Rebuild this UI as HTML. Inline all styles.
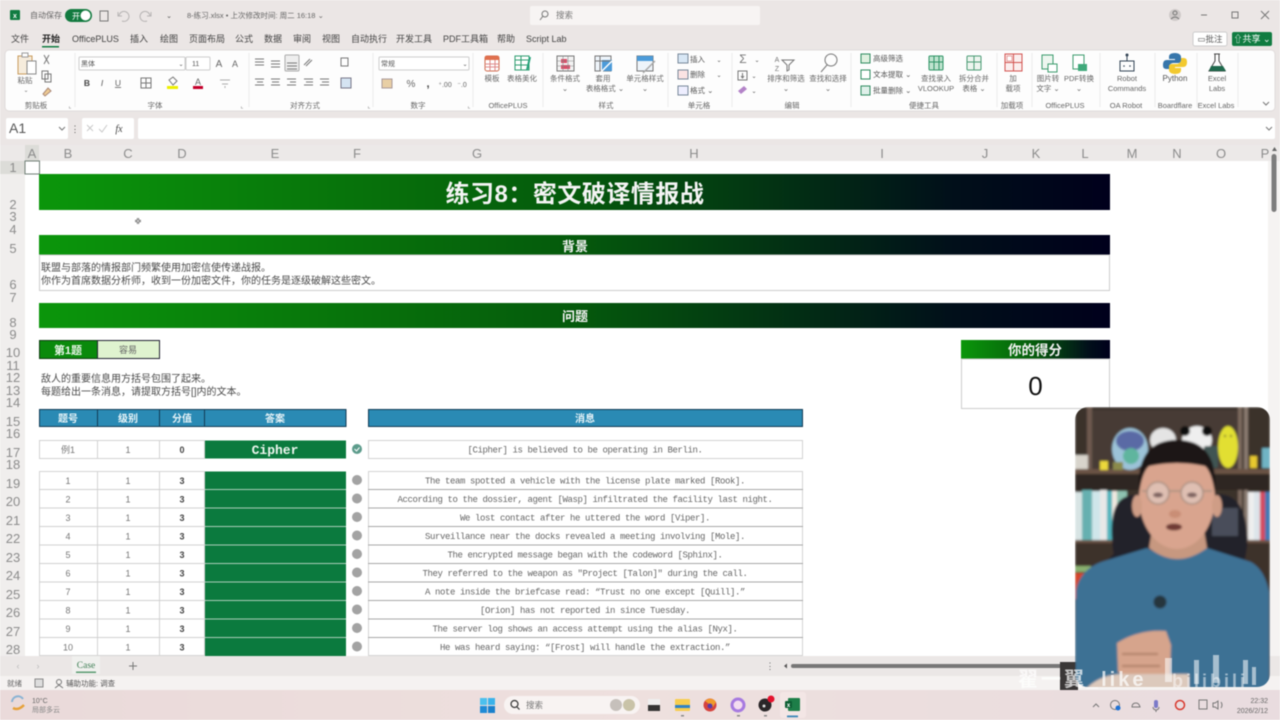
<!DOCTYPE html>
<html lang="zh"><head><meta charset="utf-8"><title>8-练习.xlsx</title>
<style>
html,body{margin:0;padding:0;width:1280px;height:720px;overflow:hidden;background:#fff}
svg{display:block;filter:blur(.45px)}
text{font-family:"Liberation Sans","Noto Sans CJK SC",sans-serif;fill:#555;font-size:8px}
.m{text-anchor:middle}
.r{text-anchor:end}
.cj{font-size:10px;fill:#4a4a4a}
.msg{font-family:"Liberation Mono","Noto Sans CJK SC",monospace;font-size:9px;letter-spacing:-.4px;fill:#666;text-anchor:middle}
.hd{font-size:13px;fill:#8c8c8c;text-anchor:middle}
.rn{font-size:13px;fill:#8c8c8c;text-anchor:middle}
.n{font-size:9px;fill:#777;text-anchor:middle}
.b{font-size:9px;fill:#444;font-weight:bold;text-anchor:middle}
.th{font-size:10px;fill:#e8f4f8;font-weight:bold;text-anchor:middle}
.mn{font-size:9px;fill:#444}
.rb{font-size:7.5px;fill:#666;text-anchor:middle}
.gl{font-size:8px;fill:#777;text-anchor:middle}
.ic{fill:none;stroke:#777;stroke-width:1}
</style></head><body>
<svg width="1280" height="720" viewBox="0 0 1280 720" xmlns="http://www.w3.org/2000/svg">
<defs>
<linearGradient id="g"><stop offset="0" stop-color="#0b960b"/><stop offset=".5" stop-color="#055a0c"/><stop offset=".85" stop-color="#01101a"/><stop offset="1" stop-color="#00001c"/></linearGradient>
<linearGradient id="tb" x1="0" x2="1"><stop offset="0" stop-color="#eadada"/><stop offset=".5" stop-color="#eee0de"/><stop offset="1" stop-color="#e9dcdf"/></linearGradient>
<clipPath id="pc"><rect x="1075" y="407" width="195" height="280" rx="13"/></clipPath>
<filter id="bl" x="-10%" y="-10%" width="120%" height="120%"><feGaussianBlur stdDeviation="1.1"/></filter>
</defs>

<!-- window chrome -->
<rect width="1280" height="720" fill="#ebe6e5"/>
<rect x="10" y="10" width="10" height="10" rx="1" fill="#107c41"/><text x="15" y="18" class="m" style="font-size:7px;fill:#fff;font-weight:bold">x</text>
<text x="30" y="18" style="font-size:8px;fill:#666">自动保存</text>
<rect x="65" y="9" width="27" height="13" rx="6.500" fill="#127a3f"/><circle cx="85.500" cy="15.500" r="5" fill="#fff"/><text x="72" y="19" style="font-size:8px;fill:#fff">开</text>
<rect x="100" y="11" width="8" height="10" class="ic"/><path d="M119 16a5 5 0 1 1 3 5M118 12v4h4" class="ic" stroke-opacity=".45"/><path d="M150 16a5 5 0 1 0-3 5M151 12v4h-4" class="ic" stroke-opacity=".45"/>
<text x="169" y="18" class="m" style="font-size:7px">⌄</text>
<text x="187" y="18" style="font-size:7.500px;fill:#666">8-练习.xlsx • 上次修改时间: 周二 16:18 ⌄</text>
<rect x="530" y="6" width="230" height="19" rx="2" fill="#f7f4f3"/><circle cx="545" cy="14" r="3" class="ic"/><path d="M543 16l-3 4" class="ic"/><text x="556" y="18" style="font-size:8.500px;fill:#777">搜索</text>
<circle cx="1175" cy="15" r="6" fill="#cfcac9"/><circle cx="1175" cy="13" r="2" class="ic"/><path d="M1171 19q4-4 8 0" class="ic"/>
<path d="M1201 15h6" class="ic"/><rect x="1232" y="12" width="6" height="6" class="ic"/><path d="M1261 11l8 8M1269 11l-8 8" class="ic"/>

<!-- menu -->
<text x="11" y="42" class="mn">文件</text><text x="42" y="42" class="mn" style="font-weight:bold;fill:#222">开始</text><rect x="42" y="46" width="17" height="1.500" fill="#107c41"/>
<text x="72" y="42" class="mn">OfficePLUS</text><text x="130" y="42" class="mn">插入</text><text x="160" y="42" class="mn">绘图</text><text x="189" y="42" class="mn">页面布局</text><text x="235" y="42" class="mn">公式</text><text x="264" y="42" class="mn">数据</text><text x="293" y="42" class="mn">审阅</text><text x="322" y="42" class="mn">视图</text><text x="351" y="42" class="mn">自动执行</text><text x="396" y="42" class="mn">开发工具</text><text x="443" y="42" class="mn">PDF工具箱</text><text x="497" y="42" class="mn">帮助</text><text x="526" y="42" class="mn">Script Lab</text>
<rect x="1193" y="32" width="34" height="14" rx="2" fill="#fff" stroke="#ccc"/><text x="1210" y="42" class="m" style="font-size:8.500px;fill:#555">▭批注</text>
<rect x="1232" y="32" width="40" height="14" rx="2" fill="#107c41"/><text x="1252" y="42" class="m" style="font-size:9px;fill:#fff">⇧共享 ⌄</text>

<!-- ribbon -->
<rect x="5" y="50" width="1270" height="61" rx="4" fill="#fdfdfd" stroke="#e0dcdb"/>
<g stroke="#ececec"><path d="M75 53v54M249 53v54M373 53v54M473 53v54M543 53v54M668 53v54M732 53v54M851 53v54M997 53v54M1032 53v54M1100 53v54M1155 53v54M1197 53v54M1238 53v54"/></g>
<!-- clipboard -->
<path d="M18 56h14v6h-4v12H18z" fill="#f6ecdc" stroke="#c99a5c"/><rect x="22" y="53" width="6" height="4" fill="#fff" stroke="#999"/><rect x="27" y="61" width="9" height="13" fill="#fff" stroke="#888"/>
<text x="25" y="83" class="rb" style="font-size:7.500px">粘贴</text><text x="26" y="92" class="gl" style="font-size:6px">⌄</text>
<path d="M44 55l5 9M49 55l-5 9" class="ic"/><rect x="42" y="71" width="6" height="8" class="ic"/><rect x="45" y="74" width="6" height="8" class="ic"/><path d="M43 94l5-6 3 3-6 5z" fill="#eecb93" stroke="#a87"/>
<text x="36" y="108" class="rb">剪贴板</text><text x="70" y="108" class="gl" style="font-size:6px">⌞</text>
<!-- font -->
<rect x="79" y="57" width="106" height="13" rx="1" fill="#fff" stroke="#ccc"/><text x="81" y="66" style="font-size:7px">黑体</text><text x="181" y="66" class="m" style="font-size:6px">⌄</text>
<rect x="186" y="57" width="24" height="13" rx="1" fill="#fff" stroke="#ccc"/><text x="192" y="66" style="font-size:7px">11</text>
<text x="219" y="67" class="m" style="font-size:10px;fill:#666">A</text><text x="235" y="67" class="m" style="font-size:9px;fill:#666">A</text>
<text x="87" y="86" class="m" style="font-size:8.500px;font-weight:bold;fill:#444">B</text><text x="102" y="86" class="m" style="font-size:8.500px;font-style:italic;fill:#555">I</text><text x="118" y="86" class="m" style="font-size:8.500px;text-decoration:underline;fill:#666">U</text>
<rect x="141" y="78" width="10" height="10" class="ic"/><path d="M146 78v10M141 83h10" class="ic"/>
<path d="M169 80l4-3 4 4-4 4z" class="ic"/><rect x="167" y="86" width="11" height="3" fill="#eef000"/>
<text x="198" y="85" class="m" style="font-size:9px;fill:#666">A</text><rect x="193" y="86" width="10" height="3" fill="#c4002b"/>
<path d="M220 80h10M222 84h6M225 86v2" class="ic" stroke-opacity=".6"/>
<text x="155" y="108" class="rb">字体</text><text x="242" y="108" class="gl" style="font-size:6px">⌞</text>
<!-- alignment -->
<g class="ic"><path d="M255 59h9M255 62h9M255 65h9M271 61h9M271 64h9M271 67h9"/><rect x="285" y="55" width="14" height="16" rx="1" fill="#eee" stroke="#aaa"/><path d="M287 63h10M287 66h10M287 69h10"/><path d="M304 65l6-6M306 66l6-6"/>
<path d="M255 79h9M257 82h6M255 85h9M271 79h9M272 82h7M271 85h9M287 79h9M290 82h6M287 85h9M304 79h9M306 82h7M304 85h9M320 79h9M322 82h7M320 85h9"/></g>
<path d="M341 58h7v8h-7z" class="ic"/><rect x="341" y="78" width="10" height="10" fill="#d5e4f2" stroke="#778"/>
<text x="305" y="108" class="rb">对齐方式</text><text x="369" y="108" class="gl" style="font-size:6px">⌞</text>
<!-- number -->
<rect x="379" y="57" width="90" height="13" rx="1" fill="#fff" stroke="#ccc"/><text x="381" y="66" style="font-size:7px">常规</text><text x="465" y="66" class="m" style="font-size:6px">⌄</text>
<rect x="382" y="79" width="10" height="9" fill="#e8cfa5" stroke="#a99"/><text x="411" y="87" class="m" style="font-size:10px;fill:#666">%</text><text x="428" y="87" class="m" style="font-size:11px;font-weight:bold;fill:#444">,</text><text x="445" y="87" class="m" style="font-size:7px;fill:#666">⁺.00</text><text x="462" y="87" class="m" style="font-size:7px;fill:#666">⁻.0</text>
<text x="418" y="108" class="rb">数字</text><text x="469" y="108" class="gl" style="font-size:6px">⌞</text>
<!-- officeplus -->
<rect x="485" y="56" width="14" height="15" rx="2" fill="#fff" stroke="#d0694a"/><rect x="485" y="56" width="14" height="4" fill="#e0704e"/><path d="M485 64h14M485 67h14M490 60v11M495 60v11" stroke="#d88" fill="none"/>
<rect x="515" y="56" width="14" height="14" fill="#fff" stroke="#2b9b6d"/><path d="M515 60h14M515 65h14M521 56v14" stroke="#2b9b6d" fill="none"/><path d="M527 70l3-13" stroke="#26a37a" stroke-width="2"/>
<text x="492" y="81" class="rb">模板</text><text x="522" y="81" class="rb">表格美化</text><text x="508" y="108" class="rb">OfficePLUS</text>
<!-- styles -->
<rect x="557" y="56" width="17" height="15" fill="#f3f3f3" stroke="#777"/><rect x="561" y="59" width="6" height="4" fill="#e04a66"/><rect x="561" y="65" width="9" height="4" fill="#e04a66"/><path d="M557 61h17M557 66h17M563 56v15M568 56v15" stroke="#888" fill="none" stroke-width=".6"/>
<rect x="595" y="56" width="16" height="15" fill="#eef4fa" stroke="#777"/><rect x="602" y="60" width="10" height="11" fill="#4c9bd9"/><path d="M595 61h16M600 56v15" stroke="#777" fill="none"/><path d="M600 73l12-12" stroke="#fff" stroke-width="1.500"/>
<rect x="637" y="56" width="16" height="15" fill="#eef4fa" stroke="#777"/><rect x="637" y="56" width="16" height="5" fill="#4c9bd9"/><path d="M643 73l12-12" stroke="#aaa" stroke-width="1.500"/>
<text x="565" y="81" class="rb">条件格式</text><text x="565" y="91" class="rb">⌄</text><text x="603" y="81" class="rb">套用</text><text x="605" y="91" class="rb">表格格式 ⌄</text><text x="645" y="81" class="rb">单元格样式</text><text x="645" y="91" class="rb">⌄</text><text x="606" y="108" class="rb">样式</text>
<!-- cells -->
<rect x="678" y="54" width="10" height="9" fill="#d8e7f5" stroke="#789"/><rect x="678" y="70" width="10" height="9" fill="#fbe3e3" stroke="#789"/><rect x="678" y="86" width="10" height="9" fill="#eef" stroke="#789"/>
<text x="690" y="62" style="font-size:7.500px">插入</text><text x="690" y="77" style="font-size:7.500px">删除</text><text x="690" y="93" style="font-size:7.500px">格式 ⌄</text><text x="719" y="62" class="m" style="font-size:6px">⌄</text><text x="719" y="77" class="m" style="font-size:6px">⌄</text><text x="699" y="108" class="rb">单元格</text>
<!-- edit -->
<text x="743" y="63" class="m" style="font-size:12px;fill:#777">Σ</text><text x="757" y="62" class="m" style="font-size:6px">⌄</text><rect x="738" y="71" width="9" height="9" class="ic"/><path d="M742.500 73v4M741 76l1.500 2 1.500-2" class="ic"/><text x="754" y="78" class="m" style="font-size:6px">⌄</text><path d="M738 91l6-5 3 3-6 5z" fill="#b383c8"/><text x="754" y="93" class="m" style="font-size:6px">⌄</text>
<text x="777" y="62" class="m" style="font-size:7px;fill:#777">A</text><text x="777" y="71" class="m" style="font-size:7px;fill:#777">Z</text><path d="M782 60h12l-5 5v5l-2 1v-6z" class="ic"/>
<circle cx="831" cy="60" r="6" class="ic"/><path d="M827 65l-6 7" class="ic"/>
<text x="786" y="81" class="rb">排序和筛选</text><text x="786" y="91" class="rb">⌄</text><text x="828" y="81" class="rb">查找和选择</text><text x="828" y="91" class="rb">⌄</text><text x="792" y="108" class="rb">编辑</text>
<!-- convenience -->
<rect x="861" y="54" width="9" height="9" fill="#dff0df" stroke="#2c8a5e"/><rect x="861" y="70" width="9" height="9" fill="#fff" stroke="#2c8a5e"/><rect x="861" y="86" width="9" height="9" fill="#dff0ea" stroke="#2c8a5e"/>
<text x="873" y="61" style="font-size:7.500px">高级筛选</text><text x="873" y="77" style="font-size:7.500px">文本提取 ⌄</text><text x="873" y="93" style="font-size:7.500px">批量删除 ⌄</text>
<rect x="929" y="56" width="14" height="14" rx="1" fill="#bfe3cf" stroke="#2d9364"/><path d="M929 62h14M934 56v14M939 56v14" stroke="#2d9364" fill="none"/>
<rect x="967" y="56" width="14" height="14" rx="1" fill="#eef5ef" stroke="#4a9a74"/><path d="M967 62h14M974 56v14" stroke="#4a9a74" fill="none"/>
<text x="936" y="81" class="rb">查找录入</text><text x="936" y="91" class="rb">VLOOKUP</text><text x="974" y="81" class="rb">拆分合并</text><text x="974" y="91" class="rb">表格 ⌄</text><text x="924" y="108" class="rb">便捷工具</text>
<!-- add-ins -->
<rect x="1005" y="54" width="17" height="17" fill="#fbeeee" stroke="#d2524f"/><path d="M1013.500 54v17M1005 62.500h17" stroke="#d2524f" fill="none"/><rect x="1007" y="56" width="5" height="5" fill="#fff" stroke="#d2524f" stroke-width=".5"/>
<text x="1013" y="81" class="rb">加</text><text x="1013" y="91" class="rb">载项</text><text x="1012" y="108" class="rb">加载项</text>
<rect x="1042" y="55" width="11" height="14" fill="#edf6ef" stroke="#3b9b6c"/><rect x="1048" y="64" width="9" height="8" fill="#fff" stroke="#3b9b6c"/><rect x="1073" y="55" width="11" height="14" fill="#fff" stroke="#3b9b6c"/><rect x="1078" y="64" width="9" height="7" fill="#3fa97a"/>
<text x="1048" y="81" class="rb">图片转</text><text x="1048" y="91" class="rb">文字 ⌄</text><text x="1079" y="81" class="rb">PDF转换</text><text x="1079" y="91" class="rb">⌄</text><text x="1065" y="108" class="rb">OfficePLUS</text>
<!-- robot -->
<path d="M1122 61h-2v10h2M1132 61h2v10h-2M1121 61h12M1121 71h12M1127 55v6" fill="none" stroke="#345"/><circle cx="1127" cy="55" r="1.500" fill="#345"/><circle cx="1124" cy="66" r=".8" fill="#345"/><circle cx="1130" cy="66" r=".8" fill="#345"/>
<text x="1127" y="81" class="rb">Robot</text><text x="1127" y="91" class="rb">Commands</text><text x="1126" y="108" class="rb">OA Robot</text>
<!-- python -->
<path d="M1175 53c-5 0-6 2-6 4v2h6v1h-8c-3 0-4 2-4 5s1 4 4 4h2v-2c0-2 2-4 4-4h5c2 0 3-1 3-3v-3c0-2-2-4-6-4z" fill="#3776ab"/><path d="M1175 74c5 0 6-2 6-4v-2h-6v-1h8c3 0 4-2 4-5s-1-4-4-4h-2v2c0 2-2 4-4 4h-5c-2 0-3 1-3 3v3c0 2 2 4 6 4z" fill="#f2c92f"/>
<text x="1175" y="81" class="rb" style="font-size:8px;fill:#555">Python</text><text x="1175" y="108" class="rb">Boardflare</text>
<!-- labs -->
<path d="M1214 54h6M1215 54v7l-6 10h16l-6-10v-7" fill="none" stroke="#444"/><path d="M1211 66h12l3 5h-17z" fill="#1f6a4d"/>
<text x="1217" y="81" class="rb">Excel</text><text x="1217" y="91" class="rb">Labs</text><text x="1216" y="108" class="rb">Excel Labs</text>
<path d="M1263 102l3 3 3-3" class="ic"/>

<!-- formula bar -->
<rect x="6" y="118" width="62" height="21" rx="2" fill="#fff"/><text x="9" y="133" style="font-size:14px;fill:#555">A1</text><path d="M59 127l3 3 3-3" class="ic"/>
<text x="75" y="132" class="m" style="font-size:9px">⋮</text>
<rect x="82" y="118" width="52" height="21" rx="2" fill="#fff"/><path d="M87 125l6 6M93 125l-6 6M99 129l3 3 5-7" class="ic" stroke-opacity=".4"/><text x="119" y="132" class="m" style="font-size:10px;font-style:italic;font-family:'Liberation Serif',serif;fill:#444">fx</text>
<rect x="138" y="118" width="1137" height="21" rx="2" fill="#fff"/><path d="M1266 127l3 3 3-3" class="ic"/>

<!-- grid frame -->
<rect x="0" y="145" width="1280" height="16" fill="#ece9e8"/>
<rect x="0" y="161" width="25" height="495" fill="#f0eeed"/>
<rect x="25" y="161" width="1243" height="495" fill="#fff"/>
<rect x="1268" y="161" width="12" height="495" fill="#f5f3f2"/>
<rect x="25" y="145" width="14" height="16" fill="#dcdcd8"/>
<rect x="0" y="161" width="25" height="13" fill="#dcdcd8"/>
<g class="hd"><text class="hd" x="32" y="158">A</text><text class="hd" x="68" y="158">B</text><text class="hd" x="128" y="158">C</text><text class="hd" x="182" y="158">D</text><text class="hd" x="275" y="158">E</text><text class="hd" x="357" y="158">F</text><text class="hd" x="477" y="158">G</text><text class="hd" x="694" y="158">H</text><text class="hd" x="882" y="158">I</text><text class="hd" x="985" y="158">J</text><text class="hd" x="1036" y="158">K</text><text class="hd" x="1085" y="158">L</text><text class="hd" x="1132" y="158">M</text><text class="hd" x="1177" y="158">N</text><text class="hd" x="1221" y="158">O</text><text class="hd" x="1265" y="158">P</text></g>
<text class="rn" x="13" y="172">1</text><text class="rn" x="13" y="209">2</text><text class="rn" x="13" y="221">3</text><text class="rn" x="13" y="234">4</text><text class="rn" x="13" y="253">5</text><text class="rn" x="13" y="289">6</text><text class="rn" x="13" y="302">7</text><text class="rn" x="13" y="327">8</text><text class="rn" x="13" y="339">9</text><text class="rn" x="13" y="357">10</text><text class="rn" x="13" y="370">11</text><text class="rn" x="13" y="382">12</text><text class="rn" x="13" y="395">13</text><text class="rn" x="13" y="407">14</text><text class="rn" x="13" y="426">15</text><text class="rn" x="13" y="438">16</text><text class="rn" x="13" y="457">17</text><text class="rn" x="13" y="469">18</text><text class="rn" x="13" y="488">19</text><text class="rn" x="13" y="506">20</text><text class="rn" x="13" y="525">21</text><text class="rn" x="13" y="543">22</text><text class="rn" x="13" y="562">23</text><text class="rn" x="13" y="580">24</text><text class="rn" x="13" y="599">25</text><text class="rn" x="13" y="617">26</text><text class="rn" x="13" y="636">27</text><text class="rn" x="13" y="654">28</text>
<rect x="25" y="161" width="14.500" height="13" fill="#fff" stroke="#6f7f76" stroke-width="1"/>

<!-- banners -->
<rect x="39" y="174" width="1071" height="36" fill="url(#g)"/>
<text x="575" y="202" class="m" style="font-size:24px;font-weight:bold;fill:#f4f4f4;letter-spacing:.5px">练习8：密文破译情报战</text>
<path d="M135 221h6M138 218v6" stroke="#333" stroke-width="2"/><path d="M135 221h6M138 218v6" stroke="#fff" stroke-width=".8"/>
<rect x="39" y="235" width="1071" height="20" fill="url(#g)"/>
<text x="575" y="251" class="m" style="font-size:13px;font-weight:bold;fill:#f4f4f4">背景</text>
<rect x="39.500" y="255" width="1070" height="35.500" fill="#fff" stroke="#cdcdcd"/>
<text x="41" y="271" class="cj">联盟与部落的情报部门频繁使用加密信使传递战报。</text>
<text x="41" y="284" class="cj">你作为首席数据分析师，收到一份加密文件，你的任务是逐级破解这些密文。</text>
<rect x="39" y="303" width="1071" height="25" fill="url(#g)"/>
<text x="575" y="321" class="m" style="font-size:13px;font-weight:bold;fill:#f4f4f4">问题</text>

<rect x="39.500" y="340.500" width="58" height="18" fill="#0a8a0c" stroke="#0f3d12"/><text x="68" y="354" class="m" style="font-size:11px;font-weight:bold;fill:#eaf6ea">第1题</text>
<rect x="97.500" y="340.500" width="62" height="18" fill="#dff3cf" stroke="#223"/><text x="128" y="353" class="m" style="font-size:9px;fill:#666">容易</text>
<text x="41" y="382" class="cj">敌人的重要信息用方括号包围了起来。</text>
<text x="41" y="395" class="cj">每题给出一条消息，请提取方括号[]内的文本。</text>

<!-- score -->
<rect x="961" y="340" width="149" height="19" fill="url(#g)"/><text x="1035" y="355" class="m" style="font-size:13.500px;font-weight:bold;fill:#f2f2f2">你的得分</text>
<rect x="961.500" y="359" width="148" height="49.500" fill="#fff" stroke="#cdcdcd"/><text x="1035.500" y="395" class="m" style="font-size:26px;fill:#111">0</text>

<!-- table header -->
<g fill="#2a8ab4" stroke="#123c55"><rect x="39.500" y="409.500" width="58" height="17"/><rect x="97.500" y="409.500" width="62" height="17"/><rect x="159.500" y="409.500" width="45" height="17"/><rect x="204.500" y="409.500" width="141.500" height="17"/><rect x="368.500" y="409.500" width="434" height="17"/></g>
<text class="th" x="68" y="422">题号</text><text class="th" x="128" y="422">级别</text><text class="th" x="182" y="422">分值</text><text class="th" x="275" y="422">答案</text><text class="th" x="585" y="422">消息</text>

<!-- example -->
<g fill="#fff" stroke="#d2d2d2"><rect x="39.500" y="440.500" width="58" height="18"/><rect x="97.500" y="440.500" width="62" height="18"/><rect x="159.500" y="440.500" width="45" height="18"/><rect x="368.500" y="440.500" width="434" height="18"/></g>
<rect x="205" y="440.500" width="141" height="18" fill="#0b7a3e"/>
<text class="n" x="68" y="453">例1</text><text class="n" x="128" y="453">1</text><text class="b" x="182" y="453">0</text>
<text x="275" y="454" class="m" style="font-family:'Liberation Mono',monospace;font-size:13px;font-weight:bold;fill:#eef6ef">Cipher</text>
<circle cx="357" cy="449" r="5" fill="#5d9c8c"/><path d="M354.500 449l2 2 3-3.500" stroke="#fff" fill="none"/>
<text class="msg" x="585" y="452.500">[Cipher] is believed to be operating in Berlin.</text>

<!-- rows -->
<g fill="#fff" stroke="#d4d4d4">
<rect x="39.500" y="471.500" width="58" height="184"/><rect x="97.500" y="471.500" width="62" height="184"/><rect x="159.500" y="471.500" width="45" height="184"/><rect x="368.500" y="471.500" width="434" height="184"/>
</g>
<path d="M39 489.500H205M39 508H205M39 526.500H205M39 545H205M39 563.500H205M39 582H205M39 600.500H205M39 619H205M39 637.500H205" stroke="#d0d0d0" fill="none"/>
<path d="M368 489.500H803M368 508H803M368 526.500H803M368 545H803M368 563.500H803M368 582H803M368 600.500H803M368 619H803M368 637.500H803" stroke="#a8a8a8" fill="none"/>
<rect x="205" y="471.500" width="141" height="184.500" fill="#0b7a3e"/>
<path d="M205 489.500H346M205 508H346M205 526.500H346M205 545H346M205 563.500H346M205 582H346M205 600.500H346M205 619H346M205 637.500H346" stroke="#a9cdb8" fill="none"/>
<g fill="#a3a3a3"><circle cx="357" cy="480" r="5"/><circle cx="357" cy="498.500" r="5"/><circle cx="357" cy="517" r="5"/><circle cx="357" cy="535.500" r="5"/><circle cx="357" cy="554" r="5"/><circle cx="357" cy="572.500" r="5"/><circle cx="357" cy="591" r="5"/><circle cx="357" cy="609.500" r="5"/><circle cx="357" cy="628" r="5"/><circle cx="357" cy="646.500" r="5"/></g>
<text class="n" x="68" y="484">1</text><text class="n" x="128" y="484">1</text><text class="b" x="182" y="484">3</text><text class="msg" x="585" y="483.500">The team spotted a vehicle with the license plate marked [Rook].</text>
<text class="n" x="68" y="502.500">2</text><text class="n" x="128" y="502.500">1</text><text class="b" x="182" y="502.500">3</text><text class="msg" x="585" y="502">According to the dossier, agent [Wasp] infiltrated the facility last night.</text>
<text class="n" x="68" y="521">3</text><text class="n" x="128" y="521">1</text><text class="b" x="182" y="521">3</text><text class="msg" x="585" y="520.500">We lost contact after he uttered the word [Viper].</text>
<text class="n" x="68" y="539.500">4</text><text class="n" x="128" y="539.500">1</text><text class="b" x="182" y="539.500">3</text><text class="msg" x="585" y="539">Surveillance near the docks revealed a meeting involving [Mole].</text>
<text class="n" x="68" y="558">5</text><text class="n" x="128" y="558">1</text><text class="b" x="182" y="558">3</text><text class="msg" x="585" y="557.500">The encrypted message began with the codeword [Sphinx].</text>
<text class="n" x="68" y="576.500">6</text><text class="n" x="128" y="576.500">1</text><text class="b" x="182" y="576.500">3</text><text class="msg" x="585" y="576">They referred to the weapon as "Project [Talon]" during the call.</text>
<text class="n" x="68" y="595">7</text><text class="n" x="128" y="595">1</text><text class="b" x="182" y="595">3</text><text class="msg" x="585" y="594.500">A note inside the briefcase read: “Trust no one except [Quill].”</text>
<text class="n" x="68" y="613.500">8</text><text class="n" x="128" y="613.500">1</text><text class="b" x="182" y="613.500">3</text><text class="msg" x="585" y="613">[Orion] has not reported in since Tuesday.</text>
<text class="n" x="68" y="632">9</text><text class="n" x="128" y="632">1</text><text class="b" x="182" y="632">3</text><text class="msg" x="585" y="631.500">The server log shows an access attempt using the alias [Nyx].</text>
<text class="n" x="68" y="650.500">10</text><text class="n" x="128" y="650.500">1</text><text class="b" x="182" y="650.500">3</text><text class="msg" x="585" y="650">He was heard saying: “[Frost] will handle the extraction.”</text>

<!-- v scrollbar -->
<path d="M1272 151l2.500-4 2.500 4z" fill="#666"/><rect x="1271.500" y="154" width="5" height="58" rx="2.500" fill="#7d7d7d"/>

<!-- tab bar -->
<rect x="0" y="656" width="1280" height="20" fill="#ebe7e6"/>
<text x="18" y="669" class="m" style="font-size:9px;fill:#bbb">‹</text><text x="38" y="669" class="m" style="font-size:9px;fill:#bbb">›</text>
<rect x="72" y="656" width="28" height="18" fill="#f0f0ee"/><text x="86" y="668" class="m" style="font-size:9.500px;font-family:'Liberation Serif',serif;fill:#3f7f55">Case</text><rect x="76" y="671.500" width="20" height="1.500" fill="#5a9a70"/>
<path d="M129 666h8M133 662v8" class="ic"/>
<text x="770" y="669" class="m" style="font-size:9px;fill:#666">⋮</text>
<path d="M784 666l3-2.500v5z" fill="#555"/>
<rect x="791" y="664" width="300" height="4" rx="2" fill="#777"/>

<!-- status bar -->
<rect x="0" y="676" width="1280" height="14" fill="#f5f2f1"/>
<text x="7" y="686" style="font-size:7.500px;fill:#666">就绪</text>
<rect x="35" y="679" width="8" height="8" fill="#ddd" stroke="#888"/>
<circle cx="59" cy="682" r="2.500" class="ic"/><path d="M55 688l4-3 4 3" class="ic"/>
<text x="66" y="686" style="font-size:7.500px;fill:#555">辅助功能: 调查</text>

<!-- taskbar -->
<rect x="0" y="690" width="1280" height="30" fill="url(#tb)"/>
<path d="M12 702a6 6 0 0 1 11-3" fill="none" stroke="#8ab3d4" stroke-width="2"/><path d="M13 708q5 3 11-3" fill="none" stroke="#e7a13a" stroke-width="2.500"/>
<text x="32" y="703" style="font-size:7px;fill:#666">10°C</text><text x="32" y="712" style="font-size:7px;fill:#888">局部多云</text>
<g fill="#1f8bd6"><rect x="480" y="698" width="7" height="7" fill="#4cc0ee"/><rect x="488" y="698" width="7" height="7" fill="#3bb2ea"/><rect x="480" y="706" width="7" height="7"/><rect x="488" y="706" width="7" height="7" fill="#1a80cc"/></g>
<rect x="504" y="696" width="136" height="18" rx="9" fill="#f8f3f2"/><circle cx="514.500" cy="704" r="3.500" fill="none" stroke="#333" stroke-width="1.200"/><path d="M517 707l2.500 2.500" stroke="#333" stroke-width="1.200"/><text x="526" y="708" style="font-size:8.500px;fill:#777">搜索</text>
<circle cx="616" cy="705" r="6" fill="#c6c0bb"/><circle cx="629" cy="705" r="6" fill="#c9c3a8"/>
<rect x="648" y="699" width="12" height="12" fill="#eee"/><rect x="648" y="705" width="12" height="6" fill="#333"/>
<rect x="675" y="699" width="15" height="12" rx="1" fill="#f7cd4d"/><rect x="675" y="705" width="15" height="3" fill="#2f83c5"/><rect x="681" y="715" width="3" height="1.500" fill="#888"/>
<circle cx="710" cy="705" r="6.500" fill="#d5433e"/><path d="M705 701a7 7 0 0 1 11 1l-3 5z" fill="#f09a2a"/><circle cx="710" cy="706" r="2.500" fill="#5a3aa8"/>
<circle cx="738" cy="705" r="7.500" fill="#a77ae0"/><circle cx="738" cy="705" r="4.500" fill="#f4dcf0"/><rect x="737" y="715" width="3" height="1.500" fill="#888"/>
<circle cx="765" cy="705" r="6.500" fill="#2a2628"/><circle cx="771" cy="699" r="3.500" fill="#e4122d"/><circle cx="764" cy="706" r="1.500" fill="#ddd"/><rect x="764" y="715" width="3" height="1.500" fill="#888"/>
<rect x="780" y="692" width="26" height="26" rx="3" fill="#f3e6e5"/><rect x="788" y="698" width="12" height="13" rx="1" fill="#1d7e48"/><rect x="785" y="701" width="7" height="7" rx="1" fill="#0d5e33"/><text x="788.500" y="707" class="m" style="font-size:6px;fill:#fff;font-weight:bold">x</text><rect x="787" y="715.500" width="11" height="1.800" fill="#3a87b8"/>
<!-- tray -->
<path d="M1093 707l3-3 3 3" class="ic" stroke="#555"/><circle cx="1115" cy="705" r="4.500" class="ic"/><circle cx="1118" cy="708" r="2.500" fill="#1f72d4"/><path d="M1132 707q0-4 4-4 3 0 4 4z" class="ic"/><rect x="1154" y="700" width="4" height="8" rx="2" fill="#7b7ac8"/><path d="M1153 707a3 3 0 0 0 6 0M1156 710v2" class="ic"/><circle cx="1180" cy="705" r="4.500" fill="none" stroke="#d8382e" stroke-width="1.500"/><rect x="1199" y="700" width="8" height="9" class="ic" stroke="#444"/><path d="M1213 703h2l3-2v8l-3-2h-2z" class="ic"/><path d="M1221 702q2 3 0 6" class="ic"/>
<text x="1268" y="703" class="r" style="font-size:7px;fill:#666">22:32</text><text x="1268" y="713" class="r" style="font-size:7px;fill:#666">2026/2/12</text>

<!-- webcam -->
<rect x="1060" y="662" width="18" height="28" fill="#3a3737"/>
<g clip-path="url(#pc)"><g filter="url(#bl)">
<rect x="1075" y="407" width="195" height="282" fill="#3a302c"/>
<rect x="1092" y="410" width="146" height="60" fill="#463a34"/>
<rect x="1087" y="407" width="5" height="130" fill="#6e5a4f"/><rect x="1238" y="407" width="4" height="130" fill="#7d6a5e"/><rect x="1244" y="407" width="4" height="130" fill="#8a7a70"/>
<rect x="1075" y="469" width="195" height="5" fill="#6a5244"/><rect x="1075" y="474" width="195" height="16" fill="#2d2623"/>
<rect x="1075" y="538" width="195" height="5" fill="#6a5244"/><rect x="1075" y="543" width="195" height="30" fill="#3d312b"/>
<ellipse cx="1130" cy="449" rx="18" ry="21" fill="#9cc3d8"/><ellipse cx="1130" cy="441" rx="14" ry="10" fill="#5a6aa5"/><ellipse cx="1131" cy="456" rx="8" ry="8" fill="#5fb59e"/>
<ellipse cx="1163" cy="440" rx="13" ry="12" fill="#e4e4e4"/><ellipse cx="1197" cy="440" rx="15" ry="14" fill="#efefef"/><circle cx="1185" cy="431" r="5" fill="#111"/><circle cx="1207" cy="431" r="5" fill="#111"/>
<rect x="1204" y="446" width="14" height="22" rx="2" fill="#3f5552"/>
<ellipse cx="1228" cy="447" rx="10" ry="21" fill="#e2df33"/><circle cx="1225" cy="436" r="1" fill="#333"/><circle cx="1231" cy="436" r="1" fill="#333"/>
<rect x="1075" y="455" width="13" height="14" fill="#d8d4cc"/><rect x="1100" y="461" width="8" height="9" fill="#ecd83a"/><rect x="1113" y="462" width="10" height="8" fill="#8a8a4c"/><rect x="1250" y="456" width="7" height="12" fill="#e8c92e"/><rect x="1262" y="448" width="8" height="20" fill="#6fb4c4"/>
<rect x="1075" y="492" width="7" height="48" fill="#d8e4e4"/><rect x="1082" y="490" width="10" height="50" fill="#66b0b0"/><rect x="1092" y="491" width="8" height="49" fill="#cfe6ea"/><rect x="1100" y="490" width="7" height="50" fill="#e8e8e8"/><rect x="1107" y="491" width="5" height="49" fill="#4fb3bc"/><rect x="1112" y="491" width="5" height="49" fill="#f0e8e0"/><rect x="1117" y="491" width="10" height="49" fill="#8ec2b0"/>
<rect x="1248" y="492" width="6" height="48" fill="#eee"/><rect x="1254" y="492" width="6" height="48" fill="#dde4ea"/><rect x="1260" y="492" width="5" height="48" fill="#d44a5e"/><rect x="1265" y="492" width="5" height="48" fill="#3e78b4"/>
<rect x="1075" y="573" width="14" height="26" fill="#d3442c"/><rect x="1075" y="566" width="16" height="6" fill="#8ab070"/>
<path d="M1113 550q-6-50 16-54 48-10 96-1 24 6 22 52l-2 12H1115z" fill="#24232a"/><rect x="1212" y="508" width="26" height="28" fill="#4a4d5a"/><path d="M1108 560q10-14 30-12h70q30 0 38 14v10h-138z" fill="#24242a"/>
<path d="M1076 590q4-20 25-28l46-14q30 16 60 0l44 14q14 8 18 30v100h-194z" fill="#3e7194"/>
<path d="M1149 548q28 22 58 0l-4-24h-50z" fill="#c79880"/>
<ellipse cx="1177" cy="497" rx="38" ry="52" fill="#d9a48e"/>
<ellipse cx="1137" cy="506" rx="5" ry="11" fill="#cf9d86"/><ellipse cx="1217" cy="506" rx="5" ry="11" fill="#cf9d86"/>
<path d="M1139 494q-4-54 38-54 42 0 38 54-3-22-10-28-28-6-56 0-7 6-10 28z" fill="#1c1718"/>
<path d="M1142 491h70" stroke="#a69082" stroke-width="1.500"/><circle cx="1158" cy="493" r="11" fill="#dfbfb2" stroke="#a88f82" stroke-width="1.500"/><circle cx="1192" cy="493" r="11" fill="#dfbfb2" stroke="#a88f82" stroke-width="1.500"/>
<ellipse cx="1158" cy="495" rx="5" ry="2.500" fill="#7f6460"/><ellipse cx="1192" cy="495" rx="5" ry="2.500" fill="#7f6460"/>
<ellipse cx="1175" cy="514" rx="6" ry="4" fill="#c98e76"/><ellipse cx="1174" cy="527" rx="8" ry="3.500" fill="#6f3a34"/>
<circle cx="1160" cy="602" r="6.500" fill="#27343c"/>
<path d="M1117 643q22-14 49-12l5 14-1 30-30 9-22-12z" fill="#d6a48c"/><path d="M1122 654h36M1122 666h38" stroke="#b08068" stroke-width="2"/>
<path d="M1085 690q12-14 34-16h70v16z" fill="#dcc9bc"/>
</g></g>
<text x="1018" y="686" style="font-size:20px;fill:#fff;fill-opacity:.72;font-weight:bold;letter-spacing:3px">翟一翼_like</text>
<g fill="#fff" fill-opacity=".55"><rect x="1165" y="658" width="7" height="24"/><rect x="1194" y="660" width="5" height="24"/><rect x="1213" y="655" width="6" height="28"/><rect x="1243" y="660" width="5" height="24"/><rect x="1252" y="667" width="4" height="18"/></g>
<text x="1172" y="687" style="font-size:18px;fill:#fff;fill-opacity:.5;font-weight:bold;letter-spacing:3px">bilibili</text>
</svg>
</body></html>
